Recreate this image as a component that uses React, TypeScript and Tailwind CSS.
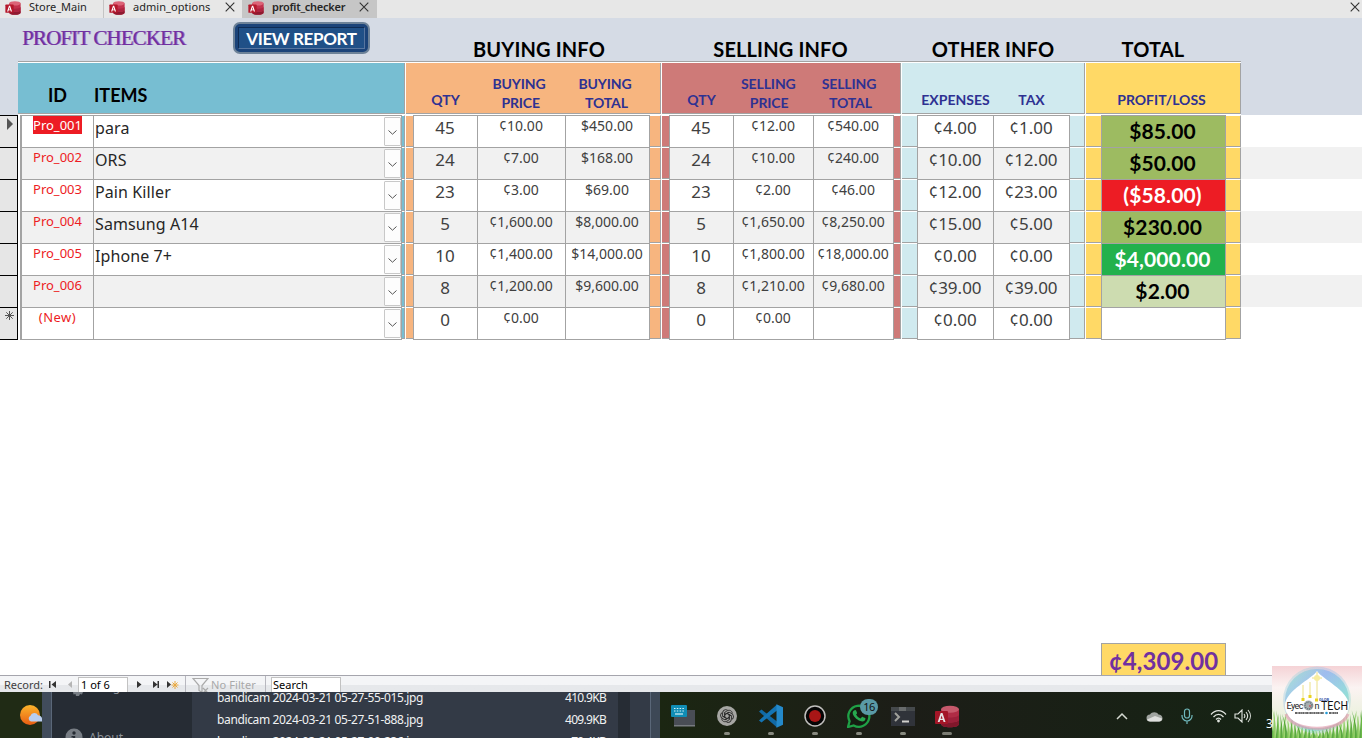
import React from "react";

const SANS = "font-['Noto_Sans','Open_Sans',sans-serif]";
const HEAD = "font-['Lato',sans-serif]";

type Row = {
  id: string;
  item: string;
  buy: [string, string, string];
  sell: [string, string, string];
  other: [string, string];
  profit: string;
  tone: string;
};

const rows: Row[] = [
  { id: "Pro_001", item: "para", buy: ["45", "¢10.00", "$450.00"], sell: ["45", "¢12.00", "¢540.00"], other: ["¢4.00", "¢1.00"], profit: "$85.00", tone: "bg-[#9dbb61] text-black" },
  { id: "Pro_002", item: "ORS", buy: ["24", "¢7.00", "$168.00"], sell: ["24", "¢10.00", "¢240.00"], other: ["¢10.00", "¢12.00"], profit: "$50.00", tone: "bg-[#9dbb61] text-black" },
  { id: "Pro_003", item: "Pain Killer", buy: ["23", "¢3.00", "$69.00"], sell: ["23", "¢2.00", "¢46.00"], other: ["¢12.00", "¢23.00"], profit: "($58.00)", tone: "bg-[#ed1c24] text-white" },
  { id: "Pro_004", item: "Samsung A14", buy: ["5", "¢1,600.00", "$8,000.00"], sell: ["5", "¢1,650.00", "¢8,250.00"], other: ["¢15.00", "¢5.00"], profit: "$230.00", tone: "bg-[#9dbb61] text-black" },
  { id: "Pro_005", item: "Iphone 7+", buy: ["10", "¢1,400.00", "$14,000.00"], sell: ["10", "¢1,800.00", "¢18,000.00"], other: ["¢0.00", "¢0.00"], profit: "$4,000.00", tone: "bg-[#22b14c] text-white" },
  { id: "Pro_006", item: "", buy: ["8", "¢1,200.00", "$9,600.00"], sell: ["8", "¢1,210.00", "¢9,680.00"], other: ["¢39.00", "¢39.00"], profit: "$2.00", tone: "bg-[#cddcb0] text-black" },
  { id: "(New)", item: "", buy: ["0", "¢0.00", ""], sell: ["0", "¢0.00", ""], other: ["¢0.00", "¢0.00"], profit: "", tone: "bg-white" },
];

function AccessIcon({ className }: { className: string }) {
  return (
    <svg viewBox="0 0 24 22" className={className}>
      <path d="M6 3.500v15c0 2 4 3.300 9 3.300s9-1.300 9-3.300v-15z" fill="#c2314d" />
      <path d="M6 14v4.500c0 2 4 3.300 9 3.300s9-1.300 9-3.300V14c0 2-4 3-9 3s-9-1-9-3z" fill="#8f1a30" />
      <path d="M6 9v5c0 2 4 3 9 3s9-1 9-3V9c0 2-4 3-9 3s-9-1-9-3z" fill="#ad2440" />
      <ellipse cx="15" cy="3.700" rx="9" ry="3.500" fill="#dc6377" />
      <rect x="0" y="5.500" width="13" height="13" rx="1" fill="#b5182b" />
      <path d="M2.700 16.500L5.700 7.500h1.800l3 9H8.600L8 14.600H5.200l-.6 1.900zm2.900-3.300h2L6.600 10z" fill="#fff" />
    </svg>
  );
}

function Close({ className = "" }: { className?: string }) {
  return (
    <svg viewBox="0 0 10 10" className={`h-[10px] w-[10px] ${className}`}>
      <path d="M.7.7l8.600 8.600M9.300.7L.7 9.300" stroke="#333" strokeWidth="1.100" />
    </svg>
  );
}

function Tabs() {
  return (
    <div className={`${SANS} flex h-[18px] shrink-0 bg-[#e7e7e7] text-[11px] leading-[14px] text-[#252525]`}>
      <div className="flex w-[104px] border-r border-[#c4c4c4] pl-[5px]">
        <AccessIcon className="mt-px h-[14px] w-4" />
        <span className="ml-2">Store_Main</span>
      </div>
      <div className="flex w-[138px] pl-[5px]">
        <AccessIcon className="mt-px h-[14px] w-4" />
        <span className="ml-2 w-[92px] tracking-[0.05px]">admin_options</span>
        <Close className="mt-[2px]" />
      </div>
      <div className="flex w-[135px] bg-[#c6c6c6] pl-[6px]">
        <AccessIcon className="mt-px h-[14px] w-4" />
        <span className="ml-2 w-[87px] font-semibold tracking-[-0.25px]">profit_checker</span>
        <Close className="mt-[2px]" />
      </div>
      <div className="flex flex-1 justify-end pr-[2px]">
        <Close className="mt-[2px]" />
      </div>
    </div>
  );
}

function GroupTitle({ className, children }: { className: string; children: React.ReactNode }) {
  return <div className={`${HEAD} shrink-0 pt-[19px] text-center text-[20px] leading-[24px] font-bold tracking-[0.15px] text-black ${className}`}>{children}</div>;
}

function HeadCell({ className, top, children }: { className: string; top?: string; children: React.ReactNode }) {
  return (
    <div className={`flex shrink-0 flex-col justify-end text-center text-[14px] leading-[19px] font-bold whitespace-pre text-[#2e3192] ${className}`}>
      {top ? <span>{top}</span> : null}
      <span>{children}</span>
    </div>
  );
}

function HeadGroup({ className, children }: { className: string; children?: React.ReactNode }) {
  return <div className={`flex h-[51px] shrink-0 border-r border-b border-[#a3a3a3] ${className}`}>{children}</div>;
}

function Header() {
  return (
    <div className="h-[97px] shrink-0 bg-[#d5dbe5]">
      <div className="flex h-[43px] pl-[22px]">
        <div className="w-[211px] pt-[8px] font-['Liberation_Serif',serif] text-[21px] leading-[24px] tracking-[-0.86px] whitespace-nowrap text-[#7030a0] [text-shadow:1px_0_0_#a070c4]">
          PROFIT CHECKER
        </div>
        <div className="mt-[4px] h-[32px] w-[137px] rounded-[7px] border-2 border-[#6d8298] bg-[#1b4379] p-[3px]">
          <div className={`${HEAD} h-full border border-t-[#0e2b54] border-r-[#57759f] border-b-[#57759f] border-l-[#0e2b54] bg-[#205087] text-center text-[17px] leading-[21px] font-bold tracking-[-0.35px] whitespace-nowrap text-white`}>
            VIEW REPORT
          </div>
        </div>
        <GroupTitle className="ml-[35px] w-[268px]">BUYING INFO</GroupTitle>
        <GroupTitle className="w-[215px]">SELLING INFO</GroupTitle>
        <GroupTitle className="w-[210px]">OTHER INFO</GroupTitle>
        <GroupTitle className="w-[110px]">TOTAL</GroupTitle>
      </div>
      <div className={`${HEAD} ml-[18px] flex h-[54px] w-[1223px] gap-px border-t border-[#a3a3a3] bg-white pt-px`}>
        <HeadGroup className="w-[387px] bg-[#77bed2]">
          <div className="w-[76px] pt-[20px] pl-[30px] text-[18px] leading-[24px] font-bold">ID</div>
          <div className="pt-[20px] text-[18px] leading-[24px] font-bold">ITEMS</div>
        </HeadGroup>
        <HeadGroup className="w-[255px] bg-[#f7b57f]">
          <HeadCell className="w-[79px] pb-[4px]">QTY</HeadCell>
          <HeadCell className="w-[68px] pb-[1px] tracking-[-0.15px]" top="BUYING">{" PRICE"}</HeadCell>
          <HeadCell className="ml-[18px] w-[68px] pb-[1px] tracking-[-0.15px]" top="BUYING">{" TOTAL"}</HeadCell>
        </HeadGroup>
        <HeadGroup className="w-[239px] bg-[#ce7a78]">
          <HeadCell className="w-[79px] pb-[4px]">QTY</HeadCell>
          <HeadCell className="w-[53px] pb-[1px] tracking-[-0.1px]" top="SELLING">{" PRICE"}</HeadCell>
          <HeadCell className="ml-[26px] w-[58px] pb-[1px] tracking-[-0.1px]" top="SELLING">{" TOTAL"}</HeadCell>
        </HeadGroup>
        <HeadGroup className="w-[183px] bg-[#d0eaef]">
          <HeadCell className="w-[107px] pb-[4px]">EXPENSES</HeadCell>
          <HeadCell className="w-[45px] pb-[4px]">TAX</HeadCell>
        </HeadGroup>
        <HeadGroup className="w-[155px] bg-[#ffd966]">
          <HeadCell className="w-[151px] pb-[4px]">PROFIT/LOSS</HeadCell>
        </HeadGroup>
      </div>
    </div>
  );
}

function Strip({ className }: { className: string }) {
  return <div className={`h-8 shrink-0 border-t border-b border-t-white border-b-[#a3a3a3] border-r-[#a3a3a3] ${className}`} />;
}

function Cell({ className, children }: { className: string; children?: React.ReactNode }) {
  return <div className={`h-8 shrink-0 border-t border-r border-[#a3a3a3] text-center leading-[20px] whitespace-nowrap ${className}`}>{children}</div>;
}

function TradeCells({ values, price, total }: { values: [string, string, string]; price: string; total: string }) {
  return (
    <>
      <Cell className="w-[65px] border-l pt-[2px] pr-px text-[17px]">{values[0]}</Cell>
      <Cell className={`pr-px text-[14px] ${price}`}>{values[1]}</Cell>
      <Cell className={`pr-px text-[14px] ${total}`}>{values[2]}</Cell>
    </>
  );
}

function RecordRow({ row, index }: { row: Row; index: number }) {
  const isNew = row.id === "(New)";
  return (
    <div className={`flex h-8 text-[#404040] ${index % 2 ? "bg-[#f1f1f1]" : "bg-white"}`}>
      <div className="h-8 w-[18px] shrink-0 border-t border-r border-black bg-[#e6e6e6]">
        {index === 0 && (
          <svg viewBox="0 0 17 16" className="h-4 w-[17px]"><path d="M7 2v12l6-6z" fill="#555" /></svg>
        )}
        {isNew && (
          <svg viewBox="0 0 17 16" className="h-4 w-[17px]"><path d="M9.500 3v9M5 7.500h9M6.300 4.300l6.400 6.400M12.700 4.300l-6.400 6.400" stroke="#555" strokeWidth="1" /></svg>
        )}
      </div>
      <div className="w-[2px] shrink-0 bg-white" />
      <Cell className={`w-[74px] border-l-2 text-[13px] text-[#ed1c24] ${isNew ? "tracking-[0.5px]" : ""}`}>
        <span className={`block h-[18px] leading-[18px] ${index === 0 ? "mx-auto w-[49px] bg-[#ed1c24] text-white" : ""}`}>{row.id}</span>
      </Cell>
      <Cell className="flex w-[308px] justify-between pt-[2px] pl-[1px] text-left text-[16px] tracking-[0.1px] text-[#262626]">
        <span>{row.item}</span>
        <span className="-mt-px flex h-[29px] w-[17px] items-center justify-center rounded-[1px] border border-[#c8c8c8] bg-[#fdfdfd]">
          <svg viewBox="0 0 9 5" className="mt-px h-[5px] w-[9px]"><path d="M.5.5l4 3.700L8.500.5" fill="none" stroke="#555" /></svg>
        </span>
      </Cell>
      <Strip className="w-[3px] border-r bg-[#77bed2]" />
      <div className="w-px shrink-0 bg-white" />
      <Strip className="w-[7px] bg-[#f7b57f]" />
      <TradeCells values={row.buy} price="w-[88px]" total="w-[84px]" />
      <Strip className="w-[11px] border-r bg-[#f7b57f]" />
      <div className="w-px shrink-0 bg-white" />
      <Strip className="w-[7px] bg-[#ce7a78]" />
      <TradeCells values={row.sell} price="w-[80px]" total="w-[80px]" />
      <Strip className="w-[7px] border-r bg-[#ce7a78]" />
      <div className="w-px shrink-0 bg-white" />
      <Strip className="w-[15px] bg-[#d0eaef]" />
      <Cell className="w-[77px] border-l pt-[2px] pr-px text-[17px]">{row.other[0]}</Cell>
      <Cell className="w-[76px] pt-[2px] pr-px text-[17px]">{row.other[1]}</Cell>
      <Strip className="w-[15px] border-r bg-[#d0eaef]" />
      <div className="w-px shrink-0 bg-white" />
      <Strip className="w-[15px] bg-[#ffd966]" />
      <div className={`${HEAD} h-8 w-[125px] shrink-0 border-t border-r border-l border-[#a3a3a3] pt-[3px] pr-[2px] text-center text-[21px] leading-[24px] font-bold tracking-[0.12px] ${row.tone}`}>
        {row.profit}
      </div>
      <Strip className="w-[15px] border-r bg-[#ffd966]" />
    </div>
  );
}

function Nav({ d, className, color = "#333" }: { d: string; className: string; color?: string }) {
  return (
    <svg viewBox="0 0 8 8" className={`mt-[5px] h-[8px] w-[8px] shrink-0 ${className}`}>
      <path d={d} fill={color} />
    </svg>
  );
}

function RecordBar() {
  return (
    <div className={`${SANS} flex h-[17px] shrink-0 overflow-hidden border-t border-[#a5a5ad] bg-linear-to-b from-[#f4f5f7] from-55% to-[#e6e8eb] to-55% text-[11px] leading-[18px] whitespace-nowrap text-[#404040]`}>
      <span className="w-[45px] pl-[4px]">Record:</span>
      <Nav className="ml-[4px]" d="M0 0h1.500v7H0zM7 0v7L2.500 3.500z" />
      <Nav className="ml-[9px]" d="M6 0v7L2 3.500z" color="#b5b5b5" />
      <span className="mt-px ml-[4px] h-[18px] w-[50px] border border-[#c2c2c2] bg-white pl-[2px] leading-[14px] text-black">1 of 6</span>
      <Nav className="ml-[8px]" d="M1 0v7l4.500-3.500z" />
      <Nav className="ml-[8px]" d="M1 0v7l4.500-3.500zM5.500 0H7v7H5.500z" />
      <svg viewBox="0 0 14 10" className="mt-[4px] ml-[6px] h-[10px] w-[14px]">
        <path d="M1 1v7l4-3.500z" fill="#333" />
        <path d="M9 1v8M5.500 5h7M6.500 2.500l5 5M11.500 2.500l-5 5" stroke="#e9a83e" />
      </svg>
      <span className="ml-[5px] w-[7px] border-l border-[#b8b8bf]" />
      <svg viewBox="0 0 18 15" className="mt-[2px] h-[15px] w-[18px]">
        <path d="M1 .5h15l-6 7v7l-3-2v-5zM11 10l5 5M16 10l-5 5" fill="none" stroke="#aaa" strokeWidth="1.200" />
      </svg>
      <span className="ml-[1px] w-[53px] tracking-[0.1px] text-[#a9a9a9]">No Filter</span>
      <span className="ml-[1px] w-[6px] border-l border-[#b8b8bf]" />
      <span className="mt-px h-[18px] w-[70px] border border-[#c2c2c2] bg-white pl-[1px] leading-[14px] text-black">Search</span>
    </div>
  );
}

function TaskIcon({ className, dot = "w-[6px]", children }: { className: string; dot?: string; children: React.ReactNode }) {
  return (
    <div className={`flex w-11 shrink-0 flex-col items-center ${className}`}>
      <div className="flex h-[28px] items-center">{children}</div>
      <div className={`mt-[2px] h-[3px] rounded-full bg-[#87897f] ${dot}`} />
    </div>
  );
}

function Taskbar() {
  return (
    <div className={`${SANS} flex h-[46px] shrink-0 overflow-hidden bg-[#182014]`}>
      <div className="w-[42px] shrink-0 bg-[#202b15] pt-[11px] pl-[19px]">
        <svg viewBox="0 0 23 24" className="h-6 w-[23px]">
          <defs>
            <linearGradient id="sun" x1="0" y1="0" x2="0" y2="1"><stop stopColor="#fbb52b" /><stop offset="1" stopColor="#e95d13" /></linearGradient>
          </defs>
          <circle cx="11" cy="12" r="10" fill="url(#sun)" />
          <path d="M12 18.500a3 3 0 0 1-.5-5.700 4 4 0 0 1 7.500-.5c2 .2 4 1.500 4 3.100v3.100z" fill="#b9cef0" />
        </svg>
      </div>
      <div className="w-[10px] shrink-0 border-r border-[#5a6778] bg-[#414c5b]" />
      <div className="w-[140px] shrink-0 bg-[#262c34] pl-[12px] text-[#8c9299]">
        <div className="flex h-[36px] items-start pl-[8px]">
          <svg viewBox="0 0 12 5" className="h-[5px] w-[12px]"><path d="M1 0h10l-1 2.500-2-.5-1 2H4L3.500 2l-2 .5z" fill="#777d84" /></svg>
          <span className="-mt-[13px] ml-[11px] text-[12px] leading-[16px]">Plugins</span>
        </div>
        <div className="flex">
          <svg viewBox="0 0 18 18" className="ml-px h-[18px] w-[18px]"><circle cx="9" cy="9" r="8.500" fill="#777d84" /><circle cx="9" cy="5" r="1.700" fill="#262c34" /><path d="M6.500 8h3.700v8H8V9.500H6.500z" fill="#262c34" /></svg>
          <span className="ml-[6px] text-[12px] leading-[20px]">About</span>
        </div>
      </div>
      <div className="flex w-[426px] shrink-0 justify-between bg-[#333a46] pr-[12px] pl-[25px] text-[12px] leading-[22px] whitespace-nowrap text-[#f1f2f3]">
        <div className="-mt-[5px] tracking-[-0.36px]">
          <div>bandicam 2024-03-21 05-27-55-015.jpg</div>
          <div>bandicam 2024-03-21 05-27-51-888.jpg</div>
          <div>bandicam 2024-03-21 05-27-00-236.jpg</div>
        </div>
        <div className="-mt-[5px] text-right tracking-[-0.7px]">
          <div>410.9KB</div>
          <div>409.9KB</div>
          <div>70.4KB</div>
        </div>
      </div>
      <div className="w-[12px] shrink-0 bg-[#262c34]" />
      <div className="w-[20px] shrink-0 bg-[#333a46]" />
      <div className="w-[10px] shrink-0 border-l border-[#5a6778] bg-[#3d4856]" />
      <div className="flex flex-1 bg-linear-to-r from-[#1b2612] via-[#1c1d17] via-35% to-[#132513] pt-[10px] pl-px">
        <TaskIcon className="" dot="w-0">
          <svg viewBox="0 0 25 22" className="h-[22px] w-[25px]">
            <path d="M6 5h18v16H3V12z" fill="#494d55" /><path d="M3 20h21v1.500H3z" fill="#777b80" />
            <rect width="16" height="12" rx="1" fill="#118db5" />
            <path d="M3 3.500h10M3 6h10" stroke="#d5f0f7" strokeDasharray="1.500 1.300" /><path d="M4 9h8" stroke="#d5f0f7" strokeWidth="1.200" />
          </svg>
        </TaskIcon>
        <TaskIcon className="">
          <svg viewBox="-10 -10 20 20" className="h-5 w-5">
            <circle r="10" fill="#a6a6a3" />
            {[0, 60, 120, 180, 240, 300].map((a) => (
              <path key={a} transform={`rotate(${a})`} d="M-2.300 1.300V-3.700L0-5.100C2.500-6.600 5.300-5.200 5.300-2.500M0-2.600l4.200 2.400" fill="none" stroke="#2b2b2b" strokeWidth=".9" />
            ))}
          </svg>
        </TaskIcon>
        <TaskIcon className="">
          <svg viewBox="0 0 24 24" className="h-6 w-6">
            <path d="M0 7.500l2.500-2 15.500 12V23.500z" fill="#1169a5" />
            <path d="M0 16.500l2.500 2 15.500-12V.5z" fill="#1474b4" />
            <path d="M17.500.3L24 3.200v17.600l-6.500 2.900z" fill="#2489ca" />
          </svg>
        </TaskIcon>
        <TaskIcon className="">
          <svg viewBox="0 0 22 22" className="h-[22px] w-[22px]"><circle cx="11" cy="11" r="10" fill="#050505" stroke="#c0bfbd" strokeWidth="1.500" /><circle cx="11" cy="11" r="6" fill="#a81616" /></svg>
        </TaskIcon>
        <TaskIcon className="relative">
          <svg viewBox="0 0 24 24" className="h-6 w-6">
            <path d="M1 23l1.600-5.800A10.500 10.500 0 1 1 6.700 21.400z" fill="#151b11" stroke="#1fa046" strokeWidth="2.300" />
            <path d="M7 6.500c1-1 1.800-.6 2.100.1l1 2.300c.1.500-1 1.500-1 1.500 1 2 2.400 3.200 4.500 4.100l1.300-1.500c.3-.3.500-.3.800-.1l2.500 1.200c.6.300.2 1.800-.4 2.400-1 1-2.700 1.300-4.500.6-3.800-1.400-7.500-5-7.600-8 0-1.100.5-2 1.300-2.600z" fill="#27a84e" />
          </svg>
          <span className="absolute -top-[3px] right-[3px] flex h-[16px] w-[18px] items-center justify-center rounded-full bg-[#5a9aa6] text-[11px] tracking-[-0.5px] text-[#111]">16</span>
        </TaskIcon>
        <TaskIcon className="">
          <svg viewBox="0 0 24 19" className="h-[19px] w-6">
            <path d="M0 0h24v19H0z" fill="#30333a" /><path d="M0 0h24v4H0z" fill="#45494c" /><path d="M8 0h7v4H8z" fill="#686b6c" />
            <path d="M4 6l4 4-4 4" fill="none" stroke="#a1a19b" strokeWidth="2" /><path d="M11 14.500h7" stroke="#d0d0cc" strokeWidth="2" />
          </svg>
        </TaskIcon>
        <TaskIcon className="brightness-90" dot="w-[10px]"><AccessIcon className="h-[23px] w-6" /></TaskIcon>
        <div className="ml-[147px] flex h-[28px] items-center">
          <svg viewBox="0 0 12 8" className="h-2 w-3"><path d="M1 7l5-5 5 5" fill="none" stroke="#d6dad2" strokeWidth="1.500" /></svg>
          <svg viewBox="0 0 17 11" className="ml-[18px] h-[11px] w-[17px]"><path d="M4 10.500a3.500 3.500 0 0 1 0-7 5 5 0 0 1 8.500 0c2 0 4 1.500 4 3.700s-1.500 3.300-3.300 3.300z" fill="#a0a4a0" /><path d="M1 8.500l8-3.500 7 2.500c0 2-1.300 3-3 3H4c-1.200 0-2.500-.8-3-2z" fill="#dedfdd" /></svg>
          <svg viewBox="0 0 12 17" className="ml-[18px] h-[17px] w-3"><rect x="3.500" y="1" width="5" height="9" rx="2.500" fill="none" stroke="#70b9bd" strokeWidth="1.200" /><path d="M1 7v1a5 5 0 0 0 10 0V7M6 13v3" fill="none" stroke="#70b9bd" strokeWidth="1.200" /></svg>
          <svg viewBox="0 0 17 14" className="ml-[17px] h-[14px] w-[17px]"><path d="M1 5.500C5.500.3 11.500.3 16 5.500M3.500 8c3-3.500 7-3.500 10 0M6 10.500c1.500-1.800 3.500-1.800 5 0" fill="none" stroke="#e1e5df" strokeWidth="1.200" /><circle cx="8.500" cy="12" r="1.400" fill="#e1e5df" /></svg>
          <svg viewBox="0 0 17 14" className="ml-[7px] h-[14px] w-[17px]"><path d="M1 5v4h3l4 4V1L4 5zM10 5c1 1.200 1 2.800 0 4M12 3c2 2.400 2 5.600 0 8M14 1c3.200 3.600 3.200 8.400 0 12" fill="none" stroke="#e1e5df" strokeWidth="1.100" /></svg>
        </div>
        <span className="mt-[13px] ml-[15px] text-[12px] leading-[18px] text-white">3</span>
      </div>
    </div>
  );
}

function Watermark() {
  const blades = Array.from({ length: 60 }, (_, i) => {
    const x = i * 1.55;
    const edge = Math.abs(i - 29) / 29;
    const h = 3 + edge * 20 + ((i * 7) % 5) * 1.8;
    return { x, h, lean: ((i * 5) % 9) - 4, color: i % 3 === 0 ? "#3f9827" : i % 3 === 1 ? "#6dbb42" : "#93cf65" };
  });
  return (
    <svg viewBox="0 0 90 72" className="absolute right-0 bottom-0 h-[72px] w-[90px]">
      <defs>
        <linearGradient id="sky" x1="0" y1="0" x2="0" y2="1"><stop stopColor="#f5d3d6" /><stop offset=".3" stopColor="#fbf3f2" /><stop offset="1" stopColor="#dff0cf" /></linearGradient>
        <linearGradient id="ring" x1="0" y1="0" x2="1" y2="1"><stop stopColor="#98e8c8" /><stop offset=".35" stopColor="#8ab4f2" /><stop offset=".7" stopColor="#7cd8d2" /><stop offset="1" stopColor="#e795a8" /></linearGradient>
      </defs>
      <rect width="90" height="72" fill="url(#sky)" />
      {blades.map((b) => (
        <path key={b.x} d={`M${b.x - 1} 72Q${b.x} ${72 - b.h / 2} ${b.x + b.lean} ${70 - b.h}Q${b.x + 1.5} ${72 - b.h / 2} ${b.x + 1.5} 72z`} fill={b.color} opacity=".8" />
      ))}
      <ellipse cx="45" cy="34" rx="34" ry="33.500" fill="url(#ring)" opacity=".35" />
      <ellipse cx="45" cy="34" rx="32" ry="31" fill="url(#ring)" opacity=".7" />
      <path d="M45 5C50 13 76 24 77 39c0 15-16 23-32 23S13 54 13 39C14 24 40 13 45 5z" fill="#fff" />
      <path d="M14 48c6 19 56 19 62 0" fill="none" stroke="#e29caf" strokeWidth="3" opacity=".65" />
      <path d="M45 6v27M40 12h10M31 19v13M38 16v14" stroke="#eadc78" strokeWidth=".9" />
      <circle cx="45" cy="12" r="3" fill="#f8ed9f" />
      <path d="M29.500 33.500h3M36.500 30.500h3M43 34h3" stroke="#ead321" strokeWidth="3" />
      <text x="14.500" y="43" fontSize="9" fontFamily="Roboto" fill="#222" textLength="17">Eyec</text>
      <circle cx="36.500" cy="39.500" r="5" fill="#a8afb0" /><circle cx="36.500" cy="39.500" r="3.500" fill="none" stroke="#596c75" strokeDasharray="1 1" strokeWidth="1.500" />
      <circle cx="38" cy="40" r="1" fill="#c75b63" />
      <text x="42.500" y="43" fontSize="9" fontFamily="Roboto" fill="#222">n</text>
      <text x="49" y="43.500" fontSize="12" fontFamily="Roboto" fill="#111" textLength="27" lengthAdjust="spacingAndGlyphs">TECH</text>
      <text x="47" y="34.500" fontSize="4" fontFamily="Roboto" fontWeight="bold" fill="#3b57aa">GLOB</text>
      <path d="M23 47h29M57 47h9" stroke="#333" strokeWidth="1.300" strokeDasharray="2 .4 1 .3" />
      <circle cx="54.500" cy="47" r="1.300" fill="#249ad5" />
    </svg>
  );
}

export default function App() {
  return (
    <div className="relative flex h-[738px] w-[1362px] flex-col overflow-hidden bg-white">
      <Tabs />
      <Header />
      <div className={`${SANS} shrink-0`}>
        {rows.map((row, i) => (
          <RecordRow key={row.id} row={row} index={i} />
        ))}
        <div className="flex h-px">
          <div className="w-[18px] bg-black" />
          <div className="ml-[2px] w-[382px] bg-[#a3a3a3]" />
          <div className="ml-[11px] w-[237px] bg-[#a3a3a3]" />
          <div className="ml-[19px] w-[225px] bg-[#a3a3a3]" />
          <div className="ml-[23px] w-[153px] bg-[#a3a3a3]" />
          <div className="ml-[31px] w-[125px] bg-[#a3a3a3]" />
        </div>
      </div>
      <div className="flex flex-1 items-end pl-[1101px]">
        <div className={`${HEAD} h-8 w-[125px] border border-b-0 border-[#a3a3a3] bg-[#ffd966] pt-[4px] text-center text-[24px] leading-[26px] font-bold tracking-[0.1px] text-[#7030a0]`}>
          ¢4,309.00
        </div>
      </div>
      <RecordBar />
      <Taskbar />
      <Watermark />
    </div>
  );
}
